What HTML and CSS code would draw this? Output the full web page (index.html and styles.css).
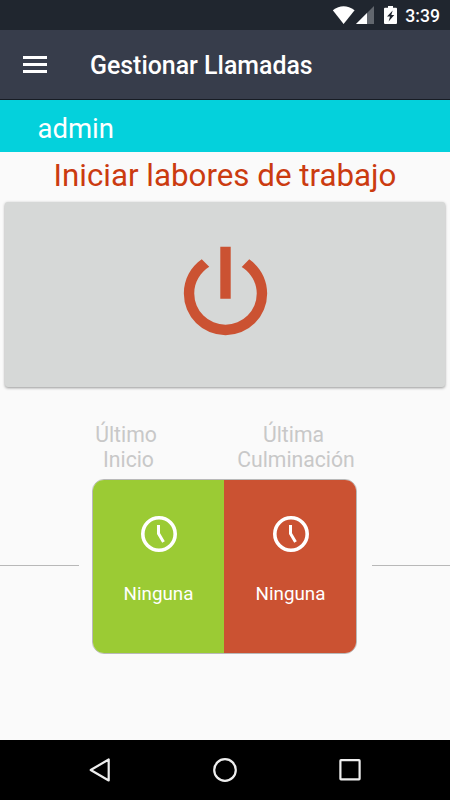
FILE: index.html
```html
<!DOCTYPE html>
<html lang="es">

<head>
  <meta charset="utf-8">
  <title>Gestionar Llamadas</title>
  <link rel="stylesheet" href="styles.css">
</head>

<body>
  <div class="status-bar">
    <svg class="wifi" width="24" height="19" viewBox="0 0 24 19">
      <path d="M0.8 4.2Q11.5-3.8 22.6 4.2L11.6 18Z" />
    </svg>
    <svg class="signal" width="19" height="19" viewBox="0 0 19 19">
      <path class="dim" d="M18 0V18H0Z" />
      <path d="M11 7V18H0Z" />
    </svg>
    <svg class="battery" width="14" height="19" viewBox="0 0 14 19">
      <path fill-rule="evenodd" d="M4 0H9V1.7H12Q13 1.7 13 2.7V17Q13 18 12 18H1Q0 18 0 17V2.7Q0 1.7 1 1.7H4ZM8.7 4.5L3 10.6H6L4.6 15.5L10.3 9H7.3Z" />
    </svg>
    <span class="clock">3:39</span>
  </div>

  <header class="toolbar">
    <button class="menu-button" type="button" aria-label="Menú">
      <span></span>
      <span></span>
      <span></span>
    </button>
    <h1>Gestionar Llamadas</h1>
  </header>

  <div class="user-bar">admin</div>

  <main>
    <h2>Iniciar labores de trabajo</h2>
    <button class="power-button" type="button" aria-label="Iniciar">
      <svg width="125" height="125" viewBox="0 0 24 24">
        <path d="M16.56 5.44L15.11 6.89C16.84 7.94 18 9.83 18 12A6 6 0 0 1 6 12C6 9.83 7.16 7.94 8.88 6.88L7.44 5.44C5.36 6.88 4 9.28 4 12A8 8 0 0 0 20 12C20 9.28 18.64 6.88 16.56 5.44M13 3H11V13H13Z" />
      </svg>
    </button>

    <div class="labels">
      <div class="label"><span>Último</span><br><span class="second">Inicio</span></div>
      <div class="label"><span class="first">Última</span><br>Culminación</div>
    </div>

    <div class="times">
      <div class="line"></div>
      <div class="card">
        <div class="half start">
          <svg width="38" height="38" viewBox="0 0 38 38">
            <circle cx="19" cy="19" r="16.2" />
            <path d="M18.5 10V18.5L23.5 27" />
          </svg>
          <span>Ninguna</span>
        </div>
        <div class="half end">
          <svg width="38" height="38" viewBox="0 0 38 38">
            <circle cx="19" cy="19" r="16.2" />
            <path d="M18.5 10V18.5L23.5 27" />
          </svg>
          <span>Ninguna</span>
        </div>
      </div>
      <div class="line"></div>
    </div>
  </main>

  <nav class="nav-bar">
    <svg width="26" height="26" viewBox="0 0 26 26">
      <path d="M21.7 2.5V23.5L3.7 13Z" />
    </svg>
    <svg width="26" height="26" viewBox="0 0 26 26">
      <circle cx="13" cy="13" r="10.8" />
    </svg>
    <svg width="26" height="26" viewBox="0 0 26 26">
      <rect x="3.4" y="3.2" width="19.2" height="19.2" rx="0.6" />
    </svg>
  </nav>
</body>

</html>
```

FILE: styles.css
```css
* {
  box-sizing: border-box;
}

body {
  margin: 0;
  height: 800px;
  display: flex;
  flex-direction: column;
  font-family: Roboto, "Liberation Sans", sans-serif;
  background-color: #fafafa;
  overflow: hidden;
}

h1,
h2 {
  margin: 0;
}

button {
  border: none;
  padding: 0;
  background: none;
}

/* Status bar */
.status-bar {
  height: 30px;
  padding-right: 10px;
  display: flex;
  justify-content: flex-end;
  align-items: center;
  background-color: #20262f;
  color: #ffffff;
}

.status-bar svg {
  fill: #ffffff;
}

.signal .dim {
  fill: #62676e;
}

.battery {
  margin-left: 9px;
}

.clock {
  margin-left: 7px;
  padding-top: 1px;
  font-size: 17.6px;
  font-weight: 500;
}

/* Toolbar */
.toolbar {
  height: 70px;
  padding-left: 23px;
  display: flex;
  align-items: center;
  background-color: #373d4b;
  border-bottom: 1px solid #171c24;
  color: #ffffff;
}

.menu-button {
  width: 24px;
  display: flex;
  flex-direction: column;
  gap: 4px;
}

.menu-button span {
  height: 3px;
  background-color: #ffffff;
}

.toolbar h1 {
  margin-left: 43px;
  padding-top: 1px;
  font-size: 24.9px;
  font-weight: 500;
}

.user-bar {
  height: 52px;
  padding: 3px 0 0 37.5px;
  line-height: 52px;
  font-size: 27.5px;
  background-color: #04d1dc;
  color: #ffffff;
}

/* Main content */
main {
  flex: 1;
}

h2 {
  height: 50px;
  line-height: 47px;
  font-size: 31.3px;
  font-weight: 400;
  text-align: center;
  color: #cb3b10;
}

.power-button {
  width: 440px;
  height: 185px;
  margin: 0 5px;
  padding-bottom: 2px;
  display: flex;
  justify-content: center;
  align-items: center;
  border-radius: 3px;
  background-color: #d6d8d7;
  box-shadow: 0 1px 3px rgba(0, 0, 0, 0.4);
}

.power-button svg {
  fill: #cb5232;
}

.labels {
  margin-top: 35px;
  height: 57px;
  display: flex;
  font-size: 21.2px;
  line-height: 25px;
  text-align: center;
  color: #c8c8c8;
}

.label {
  width: 132px;
  margin-left: 60px;
}

.label + .label {
  margin-left: 38px;
}

.label .first {
  padding-right: 5px;
}

.label .second {
  padding-left: 5px;
}

.times {
  display: flex;
  align-items: center;
}

.line {
  width: 79px;
  height: 1px;
  margin-bottom: 2px;
  background-color: #b8b8b8;
}

.card {
  width: 265px;
  height: 175px;
  margin: 0 15px 0 13px;
  display: flex;
  border: 1px solid #b9b9b9;
  border-radius: 12px;
  overflow: hidden;
}

.line:last-child {
  flex: 1;
}

.half {
  flex: 1;
  padding-top: 35px;
  display: flex;
  flex-direction: column;
  align-items: center;
  font-size: 18.8px;
  color: #ffffff;
}

.half svg {
  margin-bottom: 30px;
  fill: none;
  stroke: #ffffff;
  stroke-width: 3.6;
}

.half path {
  stroke-width: 3;
}

.start {
  background-color: #9bcb34;
}

.end {
  padding-left: 1px;
  background-color: #cb5232;
}

/* Navigation bar */
.nav-bar {
  height: 60px;
  display: flex;
  justify-content: center;
  align-items: center;
  gap: 99px;
  background-color: #000000;
}

.nav-bar svg {
  fill: none;
  stroke: #eeeeee;
  stroke-width: 2.2;
  stroke-linejoin: round;
}
```
